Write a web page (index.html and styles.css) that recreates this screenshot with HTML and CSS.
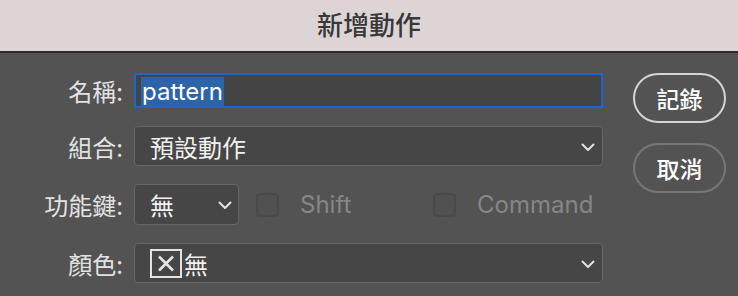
FILE: index.html
```html
<!DOCTYPE html>
<html lang="zh-Hant">
<head>
    <meta charset="UTF-8">
    <title>新增動作</title>
    <link rel="stylesheet" href="styles.css">
</head>
<body>
    <div class="titlebar">新增動作</div>

    <div class="dialog">
        <div class="form">
            <label class="label">名稱:</label>
            <div class="field">
                <div class="text-input"><span class="sel">pattern</span></div>
            </div>

            <label class="label">組合:</label>
            <div class="field">
                <div class="select wide">
                    <span>預設動作</span>
                    <svg class="chev" width="14" height="9" viewBox="0 0 14 9"><path d="M1.5 1.5 L7 7 L12.5 1.5" fill="none" stroke="#e2e2e2" stroke-width="2" stroke-linecap="round" stroke-linejoin="round"/></svg>
                </div>
            </div>

            <label class="label">功能鍵:</label>
            <div class="field keys">
                <div class="select small">
                    <span>無</span>
                    <svg class="chev" width="14" height="9" viewBox="0 0 14 9"><path d="M1.5 1.5 L7 7 L12.5 1.5" fill="none" stroke="#e2e2e2" stroke-width="2" stroke-linecap="round" stroke-linejoin="round"/></svg>
                </div>
                <div class="check shift"><span class="box"></span><span class="check-text">Shift</span></div>
                <div class="check"><span class="box"></span><span class="check-text">Command</span></div>
            </div>

            <label class="label">顏色:</label>
            <div class="field">
                <div class="select wide">
                    <span class="color-none">
                        <svg width="32" height="29" viewBox="0 0 32 29"><rect x="1" y="1" width="30" height="27" fill="none" stroke="#e4e4e4" stroke-width="2"/><path d="M9 7.5 L23 21.5 M23 7.5 L9 21.5" stroke="#e4e4e4" stroke-width="2.6"/></svg>無
                    </span>
                    <svg class="chev" width="14" height="9" viewBox="0 0 14 9"><path d="M1.5 1.5 L7 7 L12.5 1.5" fill="none" stroke="#e2e2e2" stroke-width="2" stroke-linecap="round" stroke-linejoin="round"/></svg>
                </div>
            </div>
        </div>

        <div class="buttons">
            <button class="btn btn-default">記錄</button>
            <button class="btn">取消</button>
        </div>
    </div>
</body>
</html>
```

FILE: styles.css
```css
* {
    margin: 0;
    padding: 0;
    box-sizing: border-box;
}

body {
    background: #535353;
    font-family: Inter, "Noto Sans CJK TC", sans-serif;
    color: #e6e6e6;
    width: 738px;
    height: 296px;
    overflow: hidden;
}

.titlebar {
    height: 53px;
    background: #ddd5d5;
    border-bottom: 2px solid #2c2c2c;
    text-align: center;
    font-family: "Noto Sans CJK TC", sans-serif;
    font-size: 26px;
    font-weight: 500;
    color: #383838;
    line-height: 48px;
}

.dialog {
    display: flex;
    padding-top: 20px;
}

.form {
    display: grid;
    grid-template-columns: 123px 469px;
    grid-template-rows: 35px 40px 41px 40px;
    column-gap: 11px;
    row-gap: 18px;
    align-items: center;
}

.label {
    text-align: right;
    font-family: "Noto Sans CJK TC", sans-serif;
    font-size: 24px;
    color: #e2e2e2;
    white-space: nowrap;
}

.field {
    height: 100%;
}

.text-input {
    height: 35px;
    background: #444;
    border: 2px solid #1e66cc;
    padding: 2px 0 0 5px;
}

.sel {
    display: inline-block;
    background: #2d63a9;
    color: #fff;
    font-size: 24px;
    line-height: 29px;
    padding: 0 1px;
}

.select {
    height: 100%;
    background: #464646;
    border: 1px solid #666;
    border-radius: 4px;
    display: flex;
    align-items: center;
    justify-content: space-between;
    padding: 0 7px 0 15px;
    font-family: "Noto Sans CJK TC", sans-serif;
    font-size: 24px;
    color: #f0f0f0;
}

.select.small {
    width: 105px;
    padding-right: 6px;
}

.chev {
    margin-top: 2px;
}

.keys {
    display: flex;
    align-items: center;
}

.check {
    display: flex;
    align-items: center;
}

.check.shift {
    width: 177px;
    margin-left: 17px;
}

.box {
    width: 23px;
    height: 24px;
    border: 2px solid #4a4a4a;
    border-radius: 4px;
    background: #515151;
}

.check-text {
    margin-left: 21px;
    font-size: 24px;
    color: #868686;
}

.color-none {
    display: flex;
    align-items: center;
    gap: 2px;
}

.color-none svg {
    display: block;
}

.buttons {
    display: flex;
    flex-direction: column;
    gap: 20px;
    margin-left: 30px;
}

.btn {
    width: 93px;
    height: 50px;
    border-radius: 25px;
    background: transparent;
    border: 2px solid #777;
    color: #fff;
    font-family: "Noto Sans CJK TC", sans-serif;
    font-size: 23px;
    font-weight: 500;
}

.btn-default {
    border-color: #d4d4d4;
}
```
